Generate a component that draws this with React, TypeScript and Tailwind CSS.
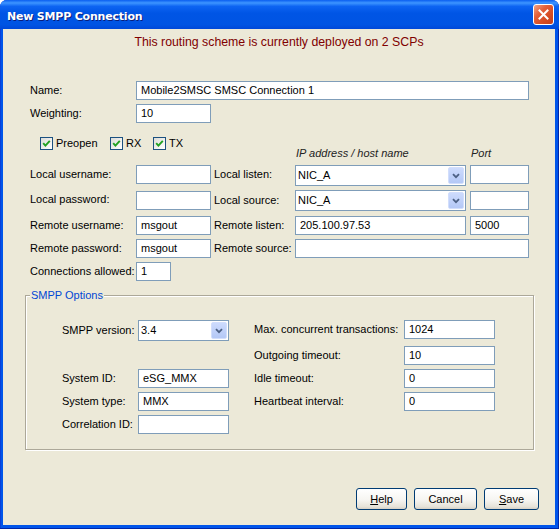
import type { ReactNode } from "react";

const sans = "font-['Liberation_Sans',Arial,sans-serif]";

function TextBox({ value = "", width }: { value?: string; width: string }) {
  return (
    <div
      className={`flex h-[19px] shrink-0 items-center border border-[#7f9db9] bg-white pl-[4px] text-[11px] text-black ${width}`}
    >
      {value}
    </div>
  );
}

function ComboBox({ value, width }: { value: string; width: string }) {
  return (
    <div
      className={`flex h-[21px] shrink-0 items-center justify-between border border-[#7f9db9] bg-white pl-[2px] pr-[1px] text-[11px] text-black ${width}`}
    >
      <span>{value}</span>
      <span className="flex h-[17px] w-[16px] items-center justify-center rounded-[2px] border border-[#d2defc] bg-[linear-gradient(180deg,#cddbfd,#b4c8f6)]">
        <svg width="8" height="6" viewBox="0 0 8 6">
          <path d="M1 1.2 L4 4.2 L7 1.2" stroke="#4d6185" strokeWidth="1.8" fill="none" />
        </svg>
      </span>
    </div>
  );
}

function Label({ children, width, h = "h-[19px]" }: { children: ReactNode; width: string; h?: string }) {
  return <div className={`flex shrink-0 items-center text-[11px] text-black ${h} ${width}`}>{children}</div>;
}

function CheckBox({ label, width }: { label: string; width: string }) {
  return (
    <div className={`flex items-center gap-[3px] text-[11px] ${width}`}>
      <span className="flex h-[13px] w-[13px] items-center justify-center border border-[#1c5180] bg-[linear-gradient(135deg,#dcdcd7,#ffffff)]">
        <svg width="9" height="9" viewBox="0 0 9 9">
          <path d="M1.2 4.2 L3.4 6.6 L7.8 1.8" stroke="#21a121" strokeWidth="1.9" fill="none" />
        </svg>
      </span>
      <span>{label}</span>
    </div>
  );
}

function Button({ children, width }: { children: ReactNode; width: string }) {
  return (
    <button
      className={`flex h-[22px] items-center justify-center rounded-[3px] border border-[#003c74] bg-[linear-gradient(180deg,#ffffff_0%,#f6f5f1_55%,#e6e3d9_88%,#d6d0c5_100%)] text-[11px] text-black ${width}`}
    >
      {children}
    </button>
  );
}

export default function App() {
  return (
    <div className={`h-[529px] w-[559px] bg-white ${sans}`}>
      <div className="flex h-full w-full flex-col overflow-hidden rounded-t-[7px] bg-[#0055ea] shadow-[inset_-1px_-1px_0_#0026a8,inset_1px_0_0_#0a3fd8]">
        {/* title bar */}
        <div className="flex h-[29px] shrink-0 items-center justify-between bg-[linear-gradient(180deg,#0a5ef0_0%,#3d95ff_10%,#0d64f2_22%,#0055e5_45%,#0054e3_85%,#0048d8_100%)] pl-[7px] pr-[5px]">
          <span className="mt-[5px] font-['DejaVu_Sans',sans-serif] text-[11px] font-bold tracking-[-0.2px] text-white [text-shadow:1px_1px_0_#0a1d7a]">
            New SMPP Connection
          </span>
          <span className="flex h-[21px] w-[21px] items-center justify-center rounded-[3px] border border-white bg-[linear-gradient(135deg,#f3a587_0%,#e3603a_35%,#d44a22_70%,#c2401c_100%)]">
            <svg width="11" height="11" viewBox="0 0 11 11">
              <path d="M1.5 1.5 L9.5 9.5 M9.5 1.5 L1.5 9.5" stroke="#ffffff" strokeWidth="2" strokeLinecap="square" />
            </svg>
          </span>
        </div>

        {/* dialog body */}
        <div className="mb-[4px] ml-[3px] mr-[4px] flex flex-1 flex-col bg-[#ece9d8] text-black">
          <p className="pt-[6px] text-center text-[12.3px] leading-[14px] text-[#800000]">
            This routing scheme is currently deployed on 2 SCPs
          </p>

          <div className="mt-[32px] pl-[27px]">
            <div className="flex">
              <Label width="w-[106px]">Name:</Label>
              <TextBox value="Mobile2SMSC SMSC Connection 1" width="w-[393px]" />
            </div>
            <div className="mt-[4px] flex">
              <Label width="w-[106px]">Weighting:</Label>
              <TextBox value="10" width="w-[75px]" />
            </div>

            <div className="mt-[14px] flex h-[13px] pl-[10px]">
              <CheckBox label="Preopen" width="w-[70px]" />
              <CheckBox label="RX" width="w-[43px]" />
              <CheckBox label="TX" width="w-[50px]" />
            </div>

            <div className="-mt-[4px] flex h-[14px] text-[11px] italic leading-[14px] text-[#222]">
              <span className="ml-[266px] w-[175px]">IP address / host name</span>
              <span>Port</span>
            </div>

            <div className="mt-[5px] flex items-start">
              <Label width="w-[106px]">Local username:</Label>
              <TextBox width="w-[75px]" />
              <Label width="w-[84px] pl-[3px]">Local listen:</Label>
              <ComboBox value="NIC_A" width="w-[171px]" />
              <div className="ml-[4px]">
                <TextBox width="w-[59px]" />
              </div>
            </div>
            <div className="mt-[4px] flex items-start">
              <Label width="w-[106px]">Local password:</Label>
              <div className="mt-[1px]">
                <TextBox width="w-[75px]" />
              </div>
              <Label width="w-[84px] pl-[3px]" h="h-[21px]">
                Local source:
              </Label>
              <ComboBox value="NIC_A" width="w-[171px]" />
              <div className="ml-[4px] mt-[1px]">
                <TextBox width="w-[59px]" />
              </div>
            </div>
            <div className="mt-[5px] flex items-start">
              <Label width="w-[106px]">Remote username:</Label>
              <TextBox value="msgout" width="w-[75px]" />
              <Label width="w-[84px] pl-[3px]">Remote listen:</Label>
              <TextBox value="205.100.97.53" width="w-[171px]" />
              <div className="ml-[4px]">
                <TextBox value="5000" width="w-[59px]" />
              </div>
            </div>
            <div className="mt-[4px] flex items-start">
              <Label width="w-[106px]">Remote password:</Label>
              <TextBox value="msgout" width="w-[75px]" />
              <Label width="w-[84px] pl-[3px]">Remote source:</Label>
              <TextBox width="w-[234px]" />
            </div>
            <div className="mt-[4px] flex items-start">
              <Label width="w-[106px]">Connections allowed:</Label>
              <TextBox value="1" width="w-[35px]" />
            </div>
          </div>

          {/* SMPP options group */}
          <div className="relative ml-[22px] mt-[14px] h-[155px] w-[509px] border border-[#aca899] shadow-[inset_1px_1px_0_#ffffff,1px_1px_0_#ffffff]">
            <span className="absolute left-[4px] top-[-8px] bg-[#ece9d8] px-[1px] text-[11px] leading-[14px] text-[#0046d5]">
              SMPP Options
            </span>
            <div className="grid grid-cols-[76px_91px_25px_150px_91px] grid-rows-[22px_19px_19px_19px_19px] gap-y-[4px] pl-[36px] pt-[24px]">
              <Label width="w-full" h="h-[21px]">
                SMPP version:
              </Label>
              <ComboBox value="3.4" width="w-[91px]" />
              <div />
              <Label width="w-full">Max. concurrent transactions:</Label>
              <TextBox value="1024" width="w-[91px]" />

              <div />
              <div />
              <div />
              <Label width="w-full">Outgoing timeout:</Label>
              <TextBox value="10" width="w-[91px]" />

              <Label width="w-full">System ID:</Label>
              <TextBox value="eSG_MMX" width="w-[91px]" />
              <div />
              <Label width="w-full">Idle timeout:</Label>
              <TextBox value="0" width="w-[91px]" />

              <Label width="w-full">System type:</Label>
              <TextBox value="MMX" width="w-[91px]" />
              <div />
              <Label width="w-full">Heartbeat interval:</Label>
              <TextBox value="0" width="w-[91px]" />

              <Label width="w-full">Correlation ID:</Label>
              <TextBox width="w-[91px]" />
            </div>
          </div>

          <div className="flex-1" />

          <div className="flex justify-end gap-[7px] pb-[15px] pr-[16px]">
            <Button width="w-[51px]">
              <span className="underline">H</span>elp
            </Button>
            <Button width="w-[63px]">Cancel</Button>
            <Button width="w-[55px]">
              <span className="underline">S</span>ave
            </Button>
          </div>
        </div>
      </div>
    </div>
  );
}
